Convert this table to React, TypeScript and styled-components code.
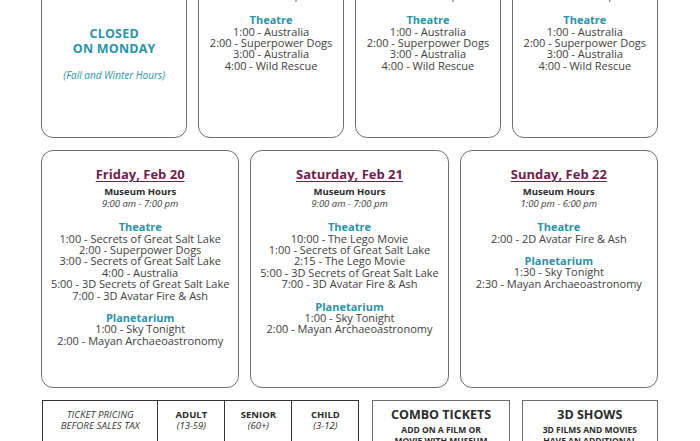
import React from "react";
import styled, { createGlobalStyle } from "styled-components";

const GlobalStyle = createGlobalStyle`
  html, body {
    margin: 0;
    padding: 0;
    background: #ffffff;
    overflow: hidden;
  }
  body {
    font-family: "Open Sans", "Noto Sans", sans-serif;
    color: #3a3a3a;
  }
`;

const TEAL = "#2a93a6";
const PLUM = "#6b1f4e";

const Page = styled.div`
  width: 617px;
  padding-left: 41px;
  margin-top: -57px;
  display: flex;
  flex-direction: column;
  gap: 12px;
`;

const CardRow = styled.div<{ $cols: number; $gap: number }>`
  display: grid;
  grid-template-columns: repeat(${(p) => p.$cols}, 1fr);
  column-gap: ${(p) => p.$gap}px;
`;

const Card = styled.div<{ $height: number }>`
  height: ${(p) => p.$height}px;
  box-sizing: border-box;
  border: 1.5px solid #6f6f6f;
  border-radius: 12px;
  padding-top: 15px;
  text-align: center;
  display: flex;
  flex-direction: column;
  align-items: center;
`;

const DateTitle = styled.div`
  font-size: 13px;
  line-height: 16px;
  font-weight: 700;
  color: ${PLUM};
  text-decoration: underline;
  text-decoration-thickness: 1px;
  text-underline-offset: 2px;
`;

const HoursLabel = styled.div`
  margin-top: 4px;
  font-size: 9.5px;
  line-height: 12px;
  font-weight: 700;
  color: #2b2b2b;
`;

const HoursTime = styled.div`
  font-size: 9.5px;
  line-height: 12px;
  font-style: italic;
  color: #3a3a3a;
`;

const SectionTitle = styled.div`
  margin-top: 11px;
  font-size: 11px;
  line-height: 11.5px;
  font-weight: 700;
  color: ${TEAL};
`;

const ShowLine = styled.div`
  font-size: 11px;
  line-height: 11.4px;
  white-space: nowrap;
  color: #404040;
`;

const ClosedTitle = styled.div`
  margin-top: 51px;
  font-size: 12.5px;
  line-height: 15px;
  font-weight: 700;
  color: ${TEAL};
  letter-spacing: 0.2px;
`;

const ClosedNote = styled.div`
  margin-top: 13px;
  font-size: 10px;
  line-height: 12px;
  font-style: italic;
  color: ${TEAL};
`;

const BottomRow = styled.div`
  display: flex;
  gap: 12px;
  padding-left: 1px;
`;

const PriceTable = styled.table`
  width: 319px;
  border-collapse: collapse;
  margin-right: 1px;
  font-size: 9px;
  line-height: 11px;
  color: #3a3a3a;

  td, th {
    border: 1px solid #333333;
    text-align: center;
    vertical-align: middle;
    padding: 0 0 5px;
  }
`;

const HeadCell = styled.th<{ $width: number }>`
  width: ${(p) => p.$width}px;
  height: 37px;
  font-size: 9.5px;
  font-weight: 700;
  color: #2b2b2b;

  span {
    display: block;
    font-weight: 400;
    font-style: italic;
  }
`;

const LabelCell = styled.th`
  height: 37px;
  font-size: 9.8px;
  font-weight: 400;
  font-style: italic;
  text-transform: uppercase;
`;

const PriceCell = styled.td`
  height: 30px;
  font-size: 11px;
`;

const InfoBox = styled.div<{ $width: number }>`
  width: ${(p) => p.$width}px;
  height: 90px;
  box-sizing: border-box;
  border: 1px solid #6f6f6f;
  padding-top: 6px;
  text-align: center;
`;

const InfoTitle = styled.div`
  font-size: 12.5px;
  line-height: 16px;
  font-weight: 700;
  color: #2b2b2b;
`;

const InfoText = styled.div`
  margin-top: 1px;
  font-size: 8.5px;
  line-height: 11px;
  font-weight: 700;
  color: #2b2b2b;
  text-transform: uppercase;
`;

type Section = { title: string; shows: string[] };
type Day = { date: string; hours: string; sections: Section[] };

const weekdayShows: Section[] = [
  {
    title: "Theatre",
    shows: [
      "1:00 - Australia",
      "2:00 - Superpower Dogs",
      "3:00 - Australia",
      "4:00 - Wild Rescue",
    ],
  },
];

const topDays: Day[] = [
  { date: "Tuesday, Feb 17", hours: "9:00 am - 5:00 pm", sections: weekdayShows },
  { date: "Wednesday, Feb 18", hours: "9:00 am - 5:00 pm", sections: weekdayShows },
  { date: "Thursday, Feb 19", hours: "9:00 am - 5:00 pm", sections: weekdayShows },
];

const weekendDays: Day[] = [
  {
    date: "Friday, Feb 20",
    hours: "9:00 am - 7:00 pm",
    sections: [
      {
        title: "Theatre",
        shows: [
          "1:00 - Secrets of Great Salt Lake",
          "2:00 - Superpower Dogs",
          "3:00 - Secrets of Great Salt Lake",
          "4:00 - Australia",
          "5:00 - 3D Secrets of Great Salt Lake",
          "7:00 - 3D Avatar Fire & Ash",
        ],
      },
      {
        title: "Planetarium",
        shows: ["1:00 - Sky Tonight", "2:00 - Mayan Archaeoastronomy"],
      },
    ],
  },
  {
    date: "Saturday, Feb 21",
    hours: "9:00 am - 7:00 pm",
    sections: [
      {
        title: "Theatre",
        shows: [
          "10:00 - The Lego Movie",
          "1:00 - Secrets of Great Salt Lake",
          "2:15 - The Lego Movie",
          "5:00 - 3D Secrets of Great Salt Lake",
          "7:00 - 3D Avatar Fire & Ash",
        ],
      },
      {
        title: "Planetarium",
        shows: ["1:00 - Sky Tonight", "2:00 - Mayan Archaeoastronomy"],
      },
    ],
  },
  {
    date: "Sunday, Feb 22",
    hours: "1:00 pm - 6:00 pm",
    sections: [
      { title: "Theatre", shows: ["2:00 - 2D Avatar Fire & Ash"] },
      {
        title: "Planetarium",
        shows: ["1:30 - Sky Tonight", "2:30 - Mayan Archaeoastronomy"],
      },
    ],
  },
];

const DayCard: React.FC<{ day: Day; height: number }> = ({ day, height }) => (
  <Card $height={height}>
    <DateTitle>{day.date}</DateTitle>
    <HoursLabel>Museum Hours</HoursLabel>
    <HoursTime>{day.hours}</HoursTime>
    {day.sections.map((s) => (
      <React.Fragment key={s.title}>
        <SectionTitle>{s.title}</SectionTitle>
        {s.shows.map((line) => (
          <ShowLine key={line}>{line}</ShowLine>
        ))}
      </React.Fragment>
    ))}
  </Card>
);

const App: React.FC = () => {
  return (
    <>
      <GlobalStyle />
      <Page>
        <CardRow $cols={4} $gap={10.5}>
          <Card $height={195}>
            <DateTitle>Monday, Feb 16</DateTitle>
            <ClosedTitle>
              CLOSED
              <br />
              ON MONDAY
            </ClosedTitle>
            <ClosedNote>(Fall and Winter Hours)</ClosedNote>
          </Card>
          {topDays.map((d) => (
            <DayCard key={d.date} day={d} height={195} />
          ))}
        </CardRow>

        <CardRow $cols={3} $gap={11}>
          {weekendDays.map((d) => (
            <DayCard key={d.date} day={d} height={238} />
          ))}
        </CardRow>

        <BottomRow>
          <PriceTable>
            <thead>
              <tr>
                <LabelCell>
                  Ticket Pricing
                  <br />
                  Before Sales Tax
                </LabelCell>
                <HeadCell $width={66}>
                  ADULT<span>(13-59)</span>
                </HeadCell>
                <HeadCell $width={66}>
                  SENIOR<span>(60+)</span>
                </HeadCell>
                <HeadCell $width={66}>
                  CHILD<span>(3-12)</span>
                </HeadCell>
              </tr>
            </thead>
            <tbody>
              <tr>
                <PriceCell>Museum</PriceCell>
                <PriceCell>$19</PriceCell>
                <PriceCell>$17</PriceCell>
                <PriceCell>$14</PriceCell>
              </tr>
            </tbody>
          </PriceTable>
          <InfoBox $width={138}>
            <InfoTitle>COMBO TICKETS</InfoTitle>
            <InfoText>
              Add on a film or
              <br />
              movie with museum
              <br />
              admission
            </InfoText>
          </InfoBox>
          <InfoBox $width={137}>
            <InfoTitle>3D SHOWS</InfoTitle>
            <InfoText>
              3D films and movies
              <br />
              have an additional
              <br />
              charge
            </InfoText>
          </InfoBox>
        </BottomRow>
      </Page>
    </>
  );
};

export default App;
